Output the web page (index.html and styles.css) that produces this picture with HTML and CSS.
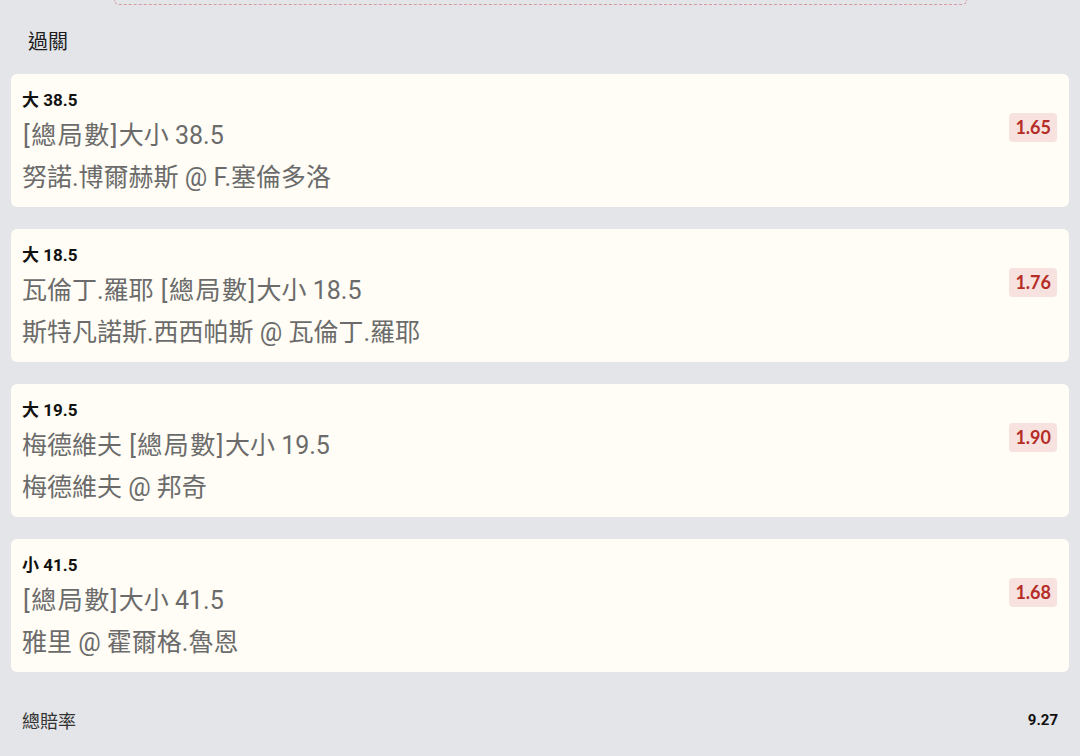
FILE: index.html
```html
<!DOCTYPE html>
<html lang="zh-Hant">
<head>
  <meta charset="UTF-8" />
  <meta name="viewport" content="width=device-width, initial-scale=1" />
  <title>過關</title>
  <link rel="stylesheet" href="styles.css">
</head>
<body>
  <div class="slip-top"></div>

  <h2 class="section-title">過關</h2>

  <main class="legs">
    <div class="leg">
      <div class="leg-info">
        <div class="leg-pick">大 38.5</div>
        <div class="leg-line"><span class="tag">[總局數]</span>大小 38.5</div>
        <div class="leg-line">努諾.博爾赫斯 @ F.塞倫多洛</div>
      </div>
      <span class="odds">1.65</span>
    </div>

    <div class="leg">
      <div class="leg-info">
        <div class="leg-pick">大 18.5</div>
        <div class="leg-line">瓦倫丁.羅耶 <span class="tag">[總局數]</span>大小 18.5</div>
        <div class="leg-line">斯特凡諾斯.西西帕斯 @ 瓦倫丁.羅耶</div>
      </div>
      <span class="odds">1.76</span>
    </div>

    <div class="leg">
      <div class="leg-info">
        <div class="leg-pick">大 19.5</div>
        <div class="leg-line">梅德維夫 <span class="tag">[總局數]</span>大小 19.5</div>
        <div class="leg-line">梅德維夫 @ 邦奇</div>
      </div>
      <span class="odds">1.90</span>
    </div>

    <div class="leg">
      <div class="leg-info">
        <div class="leg-pick">小 41.5</div>
        <div class="leg-line"><span class="tag">[總局數]</span>大小 41.5</div>
        <div class="leg-line">雅里 @ 霍爾格.魯恩</div>
      </div>
      <span class="odds">1.68</span>
    </div>
  </main>

  <footer class="total">
    <span class="total-label">總賠率</span>
    <span class="total-value">9.27</span>
  </footer>
</body>
</html>
```

FILE: styles.css
```css
body {
  margin: 0;
  background: #e4e5e8;
  font-family: Roboto, "Noto Sans CJK TC", sans-serif;
  color: #222;
  height: 756px;
  overflow: hidden;
}
.slip-top {
  margin: 0 113px 0 114px;
  height: 4px;
  border: 1px dashed #d49aa2;
  border-top: none;
  border-radius: 0 0 6px 6px;
}
.section-title {
  margin: 0;
  padding: 18px 28px 0;
  height: 69px;
  box-sizing: border-box;
  font-size: 20px;
  line-height: 38px;
  font-weight: 400;
  color: #1d1d1d;
}
.legs {
  display: flex;
  flex-direction: column;
  gap: 22px;
  padding: 0 11px;
}
.leg {
  display: flex;
  align-items: flex-start;
  background: #fffdf5;
  border-radius: 6px;
  padding: 14px 12px 8px 11px;
  height: 133px;
  box-sizing: border-box;
}
.leg-info {
  flex: 1;
}
.leg-pick {
  font-size: 17px;
  font-weight: 700;
  line-height: 24px;
  color: #111;
  margin-bottom: 3px;
}
.leg-line {
  font-size: 25px;
  line-height: 42px;
  color: #6b6b6b;
}
.leg-line .tag {
  margin-left: 1px;
  letter-spacing: 1.5px;
}
.odds {
  margin-top: 25px;
  background: #f7e2df;
  color: #b52d27;
  font-family: Lato, sans-serif;
  font-weight: 700;
  font-size: 18px;
  line-height: 29px;
  padding: 0 6px;
  border-radius: 4px;
}
.total {
  display: flex;
  justify-content: space-between;
  align-items: center;
  padding: 0 22px;
  margin-top: 33px;
  height: 30px;
}
.total-label {
  font-size: 18px;
  color: #333;
}
.total-value {
  font-size: 15px;
  font-weight: 700;
  color: #111;
}
```
